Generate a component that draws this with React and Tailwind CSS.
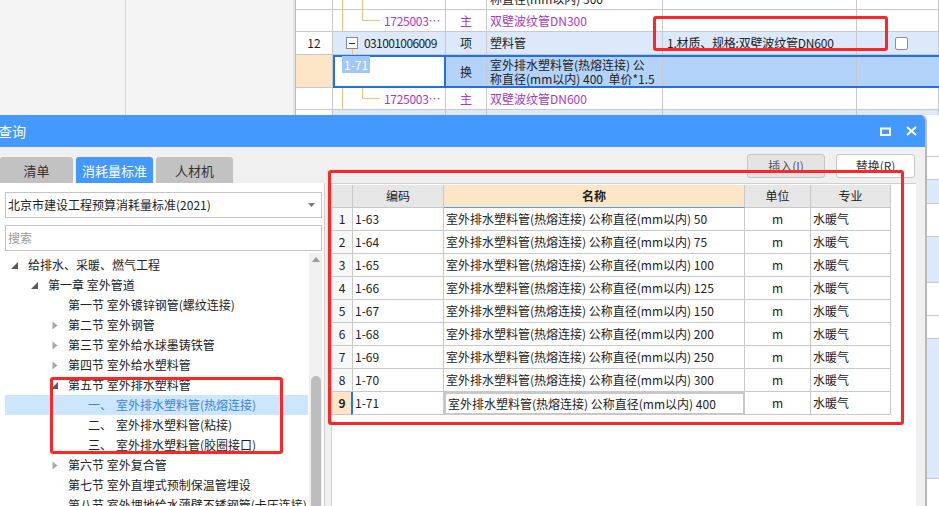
import React from "react";

const treeItems = [
  { level: 0, arrow: "open", text: "给排水、采暖、燃气工程" },
  { level: 1, arrow: "open", text: "第一章 室外管道" },
  { level: 2, text: "第一节 室外镀锌钢管(螺纹连接)" },
  { level: 2, arrow: "closed", text: "第二节 室外钢管" },
  { level: 2, arrow: "closed", text: "第三节 室外给水球墨铸铁管" },
  { level: 2, arrow: "closed", text: "第四节 室外给水塑料管" },
  { level: 2, arrow: "open", text: "第五节 室外排水塑料管" },
  { level: 3, num: "一、", text: "室外排水塑料管(热熔连接)", selected: true },
  { level: 3, num: "二、", text: "室外排水塑料管(粘接)" },
  { level: 3, num: "三、", text: "室外排水塑料管(胶圈接口)" },
  { level: 2, arrow: "closed", text: "第六节 室外复合管" },
  { level: 2, text: "第七节 室外直埋式预制保温管埋设" },
  { level: 2, text: "第八节 室外埋地给水薄壁不锈钢管(卡压连接)" },
];

const indent = ["pl-[3px]", "pl-[23px]", "pl-[43px]", "pl-[63px]"];

const quotas = [
  ["1-63", "50"],
  ["1-64", "75"],
  ["1-65", "100"],
  ["1-66", "125"],
  ["1-67", "150"],
  ["1-68", "200"],
  ["1-69", "250"],
  ["1-70", "300"],
  ["1-71", "400"],
];

// rows of the main grid that show at the right of the dialog
const stripRows = [
  "h-[42px] bg-white",
  "h-[23px] bg-white",
  "h-[24px] bg-[#dce8fb]",
  "h-[33px] bg-white",
  "h-[46px] bg-[#dce8fb]",
  "h-[33px] bg-white",
  "h-[23px] bg-white",
  "h-[140px] bg-[#dce8fb]",
  "h-[60px] bg-white",
];

const cell = "border-r border-b border-[#c8c8c8] h-full shrink-0";

// orange tree connector lines in the code column
const VLine = ({ left, top = "top-0", bottom = "bottom-0" }) => (
  <div className={`absolute w-px bg-[#f3c27e] ${left} ${top} ${bottom}`} />
);

function TreeArrow({ kind }) {
  if (kind === "open")
    return (
      <svg width="7" height="7" viewBox="0 0 7 7" className="ml-[3px]">
        <path d="M7 0 L7 7 L0 7 Z" fill="#5a5a5a" />
      </svg>
    );
  if (kind === "closed")
    return (
      <svg width="6" height="9" viewBox="0 0 6 9" className="ml-[4px]">
        <path d="M0.5 0.5 L5.5 4.5 L0.5 8.5 Z" fill="#a8a8a8" />
      </svg>
    );
  return null;
}

function MaterialRow({ name }) {
  return (
    <div className="flex h-[22px] shrink-0 text-[#a53cc0]">
      <div className={`${cell} w-[37px]`} />
      <div className={`${cell} w-[113px] relative flex items-center overflow-hidden`}>
        <VLine left="left-[9px]" />
        <VLine left="left-[29px]" bottom="bottom-[11px]" />
        <div className="absolute left-[29px] top-[10px] w-[18px] h-px bg-[#f3c27e]" />
        <span className="pl-[51px] tracking-[-0.3px]">1725003⋯</span>
      </div>
      <div className={`${cell} w-[41px] flex items-center justify-center`}>主</div>
      <div className={`${cell} w-[176px] flex items-center pl-[3px]`}>{name}</div>
      <div className={`${cell} w-[194px]`} />
      <div className={`${cell} flex-1`} />
    </div>
  );
}

function BackGrid() {
  return (
    <div className="flex h-full">
      <div className="w-[126px] h-full border-r border-[#d6d6d6]" />
      <div className="w-[167px] h-full" />
      <div className="w-[2px] h-full bg-[#e4e4e4]" />
      <div className="flex-1 h-full bg-white border-l border-[#bdbdbd] flex flex-col text-[12px] text-[#222]">
        {/* partially visible row */}
        <div className="flex h-[10px] shrink-0">
          <div className={`${cell} w-[37px]`} />
          <div className={`${cell} w-[113px] relative`}>
            <VLine left="left-[9px]" />
            <VLine left="left-[29px]" />
          </div>
          <div className={`${cell} w-[41px]`} />
          <div className={`${cell} w-[176px] overflow-hidden`}>
            <div className="leading-[12px] mt-[-7px] pl-[3px]">称直径(mm以内) 300</div>
          </div>
          <div className={`${cell} w-[194px]`} />
          <div className={`${cell} flex-1`} />
        </div>
        <MaterialRow name="双壁波纹管DN300" />
        {/* 清单 row 12 */}
        <div className="flex h-[23px] shrink-0">
          <div className={`${cell} w-[37px] flex items-center justify-center`}>12</div>
          <div className={`${cell} w-[113px] relative flex items-center bg-[#dce8fb]`}>
            <div className="absolute left-[13px] top-[5px] w-[12px] h-[12px] border border-[#8a8a8a] bg-white flex items-center justify-center">
              <div className="w-[6px] h-px bg-[#333]" />
            </div>
            <VLine left="left-[19px]" top="top-[17px]" />
            <span className="pl-[31px] tracking-[-0.6px]">031001006009</span>
          </div>
          <div className={`${cell} w-[41px] flex items-center justify-center bg-[#dce8fb]`}>项</div>
          <div className={`${cell} w-[176px] flex items-center pl-[3px] bg-[#dce8fb]`}>塑料管</div>
          <div className={`${cell} w-[194px] flex items-center pl-[4px] bg-[#dce8fb] tracking-[-0.2px]`}>1.材质、规格:双壁波纹管DN600</div>
          <div className={`${cell} flex-1 bg-[#dce8fb] flex items-center`}>
            <div className="ml-[38px] w-[13px] h-[13px] border border-[#8f8f8f] rounded-[2px] bg-white" />
          </div>
        </div>
        {/* selected 换 row */}
        <div className="flex h-[33px] shrink-0">
          <div className={`${cell} w-[37px] bg-[#fde6c8]`} />
          <div className="w-[113px] h-full shrink-0 border-2 border-[#1f6ff2] bg-white pl-[7px] pt-[1px]">
            <span className="bg-[#9ec8f8] text-white leading-[14px] px-[2px]">1-71</span>
          </div>
          <div className="flex-1 flex h-full border-y-2 border-[#1f6ff2] bg-[#b3d3fb]">
            <div className="w-[41px] shrink-0 border-r border-[#c8c8c8] flex items-center justify-center">换</div>
            <div className="w-[176px] shrink-0 border-r border-[#c8c8c8] pl-[3px] leading-[14px] pt-[1px] whitespace-nowrap overflow-hidden">
              <div>室外排水塑料管(热熔连接) 公</div>
              <div>称直径(mm以内) 400&nbsp;&nbsp;单价*1.5</div>
            </div>
            <div className="w-[194px] shrink-0 border-r border-[#c8c8c8]" />
            <div className="flex-1" />
          </div>
        </div>
        <MaterialRow name="双壁波纹管DN600" />
        <div className="flex h-[23px] shrink-0">
          <div className={`${cell} w-[37px]`} />
          <div className={`${cell} w-[113px] bg-[#dce8fb]`} />
          <div className={`${cell} w-[41px] bg-[#dce8fb]`} />
          <div className={`${cell} w-[176px] bg-[#dce8fb]`} />
          <div className={`${cell} w-[194px] bg-[#dce8fb]`} />
          <div className={`${cell} flex-1 bg-[#dce8fb]`} />
        </div>
      </div>
    </div>
  );
}

function LeftPanel() {
  return (
    <div className="w-[325px] shrink-0 flex flex-col pt-[10px]">
      <div className="flex gap-[3px] h-[26px] text-[13px]">
        <div className="w-[73px] bg-[#c2c2c2] text-[#333] rounded-t-[3px] flex items-center justify-center">清单</div>
        <div className="w-[77px] bg-[#4499ff] text-white rounded-t-[3px] flex items-center justify-center">消耗量标准</div>
        <div className="w-[77px] bg-[#c2c2c2] text-[#333] rounded-t-[3px] flex items-center justify-center">人材机</div>
      </div>
      <div className="flex-1 bg-white border-r border-[#cfcfcf] flex flex-col">
        <div className="mt-[9px] ml-[5px] mr-[2px] h-[26px] border border-[#c4c4c4] flex items-center justify-between pl-[2px] pr-[6px] text-[12px] text-[#222]">
          <span>北京市建设工程预算消耗量标准(2021)</span>
          <svg width="7" height="4" viewBox="0 0 7 4">
            <path d="M0 0 L7 0 L3.5 4 Z" fill="#777" />
          </svg>
        </div>
        <div className="mt-[7px] ml-[5px] mr-[2px] h-[26px] border border-[#c4c4c4] flex items-center pl-[2px] text-[12px] text-[#9a9a9a]">
          搜索
        </div>
        <div className="flex mt-[2px] flex-1">
          <div className="flex-1 pt-[2px] text-[12px] text-[#222]">
            {treeItems.map((it, i) => (
              <div
                key={i}
                className={`h-[20px] ml-[5px] mr-[1px] flex items-center whitespace-nowrap ${indent[it.level]} ${it.selected ? "bg-[#cce6ff] text-[#3a84d8]" : ""}`}
              >
                <div className="w-[20px] shrink-0 flex items-center">
                  <TreeArrow kind={it.arrow} />
                </div>
                {it.num && <span className="w-[28px] shrink-0">{it.num}</span>}
                <span>{it.text}</span>
              </div>
            ))}
          </div>
          <div className="w-[13px] mr-[2px] bg-[#f0f0f0] flex flex-col items-center pt-[4px]">
            <svg width="8" height="5" viewBox="0 0 8 5">
              <path d="M0 5 L4 0 L8 5 Z" fill="#9a9a9a" />
            </svg>
            <div className="mt-[114px] w-[10px] flex-1 bg-[#bdbdbd] rounded-[5px]" />
          </div>
        </div>
      </div>
    </div>
  );
}

function RightPanel() {
  return (
    <div className="flex-1 flex flex-col">
      <div className="flex justify-end gap-[11px] mt-[7px] mr-[10px] h-[24px] text-[12px]">
        <div className="w-[78px] bg-[#e4e4e4] border border-[#c6c6c6] rounded-[3px] flex items-center justify-center text-[#555]">插入(I)</div>
        <div className="w-[79px] bg-white border border-[#c6c6c6] rounded-[3px] flex items-center justify-center text-[#333]">替换(R)</div>
      </div>
      <div className="flex-1 mt-[5px] ml-[6px] mr-[9px] bg-white border-l border-t border-[#cfcfcf] pt-px text-[12px] text-[#222]">
        <div className="flex h-[23px] text-[12px]">
          <div className="w-[21px] bg-[#e6e6e6] border-r border-b border-[#c8c8c8]" />
          <div className="w-[91px] bg-[#e6e6e6] border-r border-b border-[#c8c8c8] flex items-center justify-center">编码</div>
          <div className="w-[301px] bg-[#fde6c8] border-r border-b border-b-[#5a9be8] border-r-[#c8c8c8] flex items-center justify-center font-bold">名称</div>
          <div className="w-[66px] bg-[#e6e6e6] border-r border-b border-[#c8c8c8] flex items-center justify-center">单位</div>
          <div className="w-[80px] bg-[#e6e6e6] border-r border-b border-[#c8c8c8] flex items-center justify-center">专业</div>
        </div>
        {quotas.map(([code, size], i) => {
          const last = i === quotas.length - 1;
          return (
            <div key={code} className="flex h-[23px]">
              <div className={`w-[21px] border-r border-b border-[#c8c8c8] flex items-center justify-center ${last ? "bg-[#fde6c8] font-bold" : "bg-[#f8f8f8]"}`}>{i + 1}</div>
              <div className={`w-[91px] border-r border-b border-[#c8c8c8] flex items-center pl-[2px] ${last ? "border-l-2 border-l-[#2176ff] ml-[-2px] w-[93px]" : ""}`}>{code}</div>
              <div className={`w-[301px] border-[#c8c8c8] flex items-center pl-[2px] whitespace-nowrap ${last ? "border-2 border-[#808080]" : "border-r border-b"}`}>
                室外排水塑料管(热熔连接) 公称直径(mm以内) {size}
              </div>
              <div className="w-[66px] border-r border-b border-[#c8c8c8] flex items-center justify-center">m</div>
              <div className="w-[80px] border-r border-b border-[#c8c8c8] flex items-center pl-[2px]">水暖气</div>
            </div>
          );
        })}
      </div>
    </div>
  );
}

export default function App() {
  return (
    <div className="relative w-[939px] h-[506px] overflow-hidden bg-[#f4f4f4] font-['Noto_Sans_CJK_SC',sans-serif] text-[12px] leading-none">
      <div className="h-[115px] overflow-hidden">
        <BackGrid />
      </div>

      {/* main grid rows that show at the right of the dialog */}
      <div className="absolute left-[925px] top-[115px] w-[14px] flex flex-col">
        {stripRows.map((r, i) => (
          <div key={i} className={`${r} border-b border-[#c8c8c8]`} />
        ))}
      </div>

      {/* query dialog */}
      <div className="absolute left-0 top-[115px] w-[927px] h-[400px] bg-[#f0f0f0] rounded-tr-[6px] border-r-2 border-[#b8b8b8] flex flex-col overflow-hidden">
        <div className="h-[32px] shrink-0 bg-[#4499ff] flex items-center justify-between">
          <span className="ml-[-2px] text-white text-[14px]">查询</span>
          <div className="flex items-center gap-[15px] mr-[8px]">
            <svg width="11" height="9" viewBox="0 0 11 9">
              <rect x="1" y="1.5" width="9" height="6.5" fill="none" stroke="white" strokeWidth="2" />
            </svg>
            <svg width="11" height="10" viewBox="0 0 11 10">
              <path d="M1 1 L10 9 M10 1 L1 9" stroke="white" strokeWidth="2" />
            </svg>
          </div>
        </div>
        <div className="flex flex-1">
          <LeftPanel />
          <RightPanel />
        </div>
      </div>

      {/* red annotation boxes */}
      <div className="absolute left-[653px] top-[16px] w-[235px] h-[35px] border-[3px] border-[#ff2626] rounded-[3px]" />
      <div className="absolute left-[50px] top-[377px] w-[233px] h-[77px] border-[3px] border-[#ff2626] rounded-[3px]" />
      <div className="absolute left-[328px] top-[170px] w-[576px] h-[255px] border-[3px] border-[#ff2626] rounded-[3px]" />
    </div>
  );
}
